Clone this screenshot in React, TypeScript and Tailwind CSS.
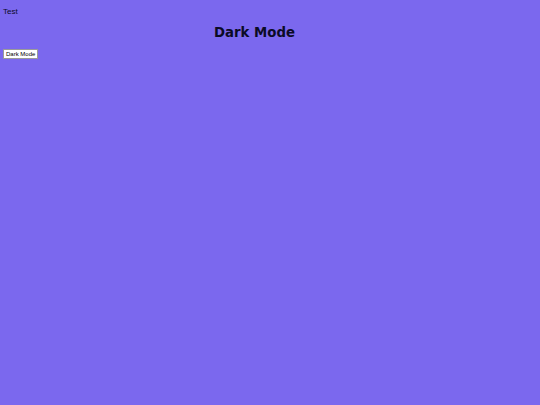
export default function App() {
  return (
    <div className="min-h-[405px] w-full bg-[#7b68ee] text-[#0b0b26] px-[3px] pt-[7px]">
      <p className="font-['Liberation_Sans',Arial,sans-serif] text-[8px] leading-[10px]">Test</p>
      <h1 className="mt-[8px] pr-[31px] text-center font-['DejaVu_Sans',Verdana,sans-serif] font-bold text-[13.3px] leading-[16px]">
        Dark Mode
      </h1>
      <button className="mt-[8px] block bg-white border border-[#9a9a9a] px-[2px] h-[10px] text-[6px] leading-[8px] font-['Liberation_Sans',Arial,sans-serif] text-black">
        Dark Mode
      </button>
    </div>
  );
}
